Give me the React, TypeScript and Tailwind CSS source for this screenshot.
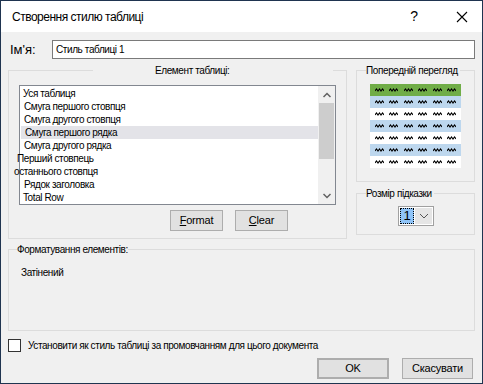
import React from 'react'

const items = [
  { label: 'Уся таблиця', pl: 'pl-[3px]' },
  { label: 'Смуга першого стовпця', pl: 'pl-[4px]' },
  { label: 'Смуга другого стовпця', pl: 'pl-[4px]' },
  { label: 'Смуга першого рядка', pl: 'pl-[4px]', selected: true },
  { label: 'Смуга другого рядка', pl: 'pl-[4px]' },
  { label: 'Перший стовпець', pl: '-ml-[3px]' },
  { label: 'останнього стовпця', pl: '-ml-[6px]' },
  { label: 'Рядок заголовка', pl: 'pl-[4px]' },
  { label: 'Total Row', pl: 'pl-[3px]' },
]

const rows = ['header', 'band', 'plain', 'band', 'plain', 'band', 'plain']

// small caption text used all over the dialog
const small = 'text-[10px] tracking-[-0.4px]'

function Squiggle() {
  return (
    <svg width="9" height="4" viewBox="0 0 9 4" className="block">
      <polyline points="0,3 1.5,1 3,3 4.5,1 6,3 7.5,1 9,3" fill="none" stroke="#000" strokeWidth="1.1" />
    </svg>
  )
}

function Btn({ children, className = '' }: { children: React.ReactNode; className?: string }) {
  return (
    <div className={`flex h-[21px] items-center justify-center border border-[#adadad] bg-[#e1e1e1] text-[11px] tracking-[-0.2px] text-black ${className}`}>
      {children}
    </div>
  )
}

export default function App() {
  return (
    <div
      className="flex h-[384px] w-[483px] flex-col border border-[#1f3450] bg-[#f0f0f0] text-black"
      style={{ fontFamily: '"Liberation Sans", Arial, sans-serif' }}
    >
      {/* title bar */}
      <div className="flex h-[31px] shrink-0 items-center bg-white pl-[11px] pr-[14px]">
        <span className="text-[12px] tracking-[-0.5px]">Створення стилю таблиці</span>
        <span className="ml-auto mr-[38px] text-[14px]">?</span>
        <svg width="12" height="12" viewBox="0 0 12 12">
          <path d="M1 1 L11 11 M11 1 L1 11" stroke="#000" strokeWidth="1.1" />
        </svg>
      </div>

      <div className="flex flex-1 flex-col px-[7px]">
        {/* name */}
        <div className="mt-[8px] flex items-center">
          <span className="w-[44px] pl-[2px] text-[13px]">Ім'я:</span>
          <div className={`flex h-[19px] flex-1 items-center border border-[#7a7a7a] bg-white pl-[3px] ${small}`}>
            Стиль таблиці 1
          </div>
        </div>

        <div className="mt-[4px] flex gap-[9px]">
          {/* element group */}
          <fieldset className="h-[175px] w-[339px] min-w-0 border border-[#dcdcdc] px-[10px]">
            <legend className={`ml-[74px] w-[240px] pl-[62px] leading-[13px] ${small}`}>Елемент таблиці:</legend>
            <div className="mt-[8px] flex h-[120px] border border-[#828790] bg-white">
              <div className="flex flex-1 flex-col pt-[1px]">
                {items.map((it) => (
                  <div
                    key={it.label}
                    className={`flex h-[13px] shrink-0 items-center whitespace-nowrap pt-[1px] leading-[13px] ${small} ${it.pl} ${it.selected ? 'ml-[1px] bg-[#e3e3e8]' : ''}`}
                  >
                    {it.label}
                  </div>
                ))}
              </div>
              <div className="flex w-[17px] flex-col items-center bg-[#f0f0f0]">
                <svg width="8" height="6" viewBox="0 0 8 6" className="mt-[6px]">
                  <path d="M0.5 5 L4 1.5 L7.5 5" fill="none" stroke="#606060" strokeWidth="1.5" />
                </svg>
                <div className="mt-[5px] h-[56px] w-[15px] bg-[#cdcdcd]" />
                <svg width="8" height="6" viewBox="0 0 8 6" className="mt-auto mb-[5px]">
                  <path d="M0.5 1 L4 4.5 L7.5 1" fill="none" stroke="#606060" strokeWidth="1.5" />
                </svg>
              </div>
            </div>
            <div className="mt-[5px] flex gap-[12px] pl-[151px]">
              <Btn className="w-[53px]">
                <span>
                  <span className="underline">F</span>ormat
                </span>
              </Btn>
              <Btn className="w-[53px]">
                <span>
                  <span className="underline">C</span>lear
                </span>
              </Btn>
            </div>
          </fieldset>

          {/* right column */}
          <div className="flex w-[119px] flex-col">
            <fieldset className="h-[118px] min-w-0 border border-[#dcdcdc] pl-[13px]">
              <legend className={`-ml-[4px] whitespace-nowrap pr-[2px] leading-[13px] ${small}`}>Попередній перегляд</legend>
              <div className="mt-[7px] flex w-[91px] flex-col">
                {rows.map((r, i) => (
                  <div
                    key={i}
                    className={`flex h-[12px] items-center justify-around px-[2px] ${r === 'header' ? 'bg-[#70ad47]' : r === 'band' ? 'bg-[#bdd7ee]' : 'bg-white'}`}
                  >
                    {[0, 1, 2, 3, 4, 5].map((c) => (
                      <Squiggle key={c} />
                    ))}
                  </div>
                ))}
              </div>
            </fieldset>
            <fieldset className="mt-[5px] h-[48px] min-w-0 border border-[#dcdcdc]">
              <legend className={`ml-[9px] whitespace-nowrap pr-[2px] leading-[13px] ${small}`}>Розмір підказки</legend>
              <div className="ml-[41px] mt-[6px] flex h-[20px] w-[36px] border border-[#a0a0a0] bg-white p-[1px]">
                <div className="flex w-[14px] items-center justify-center border border-dotted border-black bg-[#8fc4f8] text-[13px]">
                  1
                </div>
                <div className="ml-[1px] flex flex-1 items-center justify-center bg-[#e5e5e5]">
                  <svg width="10" height="6" viewBox="0 0 10 6">
                    <path d="M1 1 L5 5 L9 1" fill="none" stroke="#555" strokeWidth="1" />
                  </svg>
                </div>
              </div>
            </fieldset>
          </div>
        </div>

        {/* formatting group */}
        <fieldset className="mt-[4px] h-[88px] min-w-0 border border-[#dcdcdc] px-[11px]">
          <legend className={`-ml-[3px] leading-[13px] ${small}`}>Форматування елементів:</legend>
          <div className={`mt-[9px] pl-[1px] ${small}`}>Затінений</div>
        </fieldset>

        {/* checkbox */}
        <div className="mt-[7px] flex items-center">
          <div className="h-[13px] w-[13px] border border-[#333] bg-white" />
          <span className={`ml-[7px] ${small}`}>Установити як стиль таблиці за промовчанням для цього документа</span>
        </div>

        {/* buttons */}
        <div className="mt-[5px] flex justify-end gap-[13px] pr-[2px]">
          <Btn className="w-[72px] border-2 border-[#0078d7]">OK</Btn>
          <Btn className="w-[71px]">Скасувати</Btn>
        </div>
      </div>
    </div>
  )
}
